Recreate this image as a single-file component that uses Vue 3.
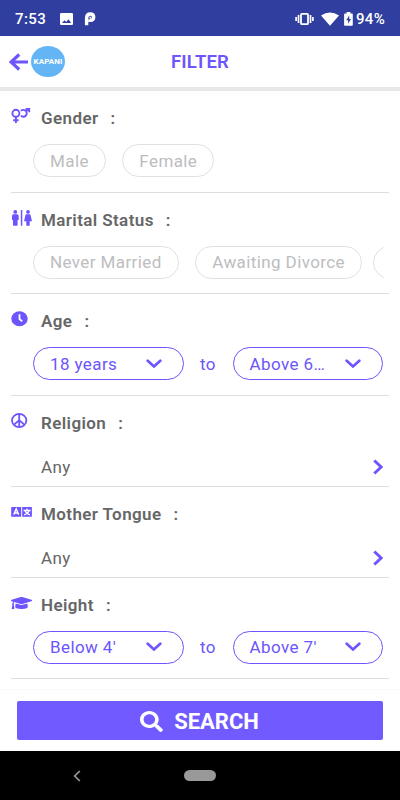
<template>
  <div class="screen">
    <div class="status-bar">
      <span class="time">7:53</span>
      <svg class="picture" viewBox="0 0 13 12" width="13" height="12">
        <path fill="#fff" fill-rule="evenodd" d="M1.2 0h10.6Q13 0 13 1.2v9.6q0 1.2-1.2 1.2H1.2Q0 12 0 10.800V1.200Q0 0 1.200 0zM2 10h9.200L8.400 6.300 6.200 9 4.500 7.200z" />
      </svg>
      <svg class="p-logo" viewBox="0 0 12 14" width="12" height="14">
        <path d="M2.600 13.300V6.200Q2.600 2 6.300 2q3.400 0 3.400 3.200 0 3.100-3.600 3.100" fill="none" stroke="#fff" stroke-width="3.400" />
        <path d="M4.200 10V7.200h2.400V10zM5.500 4.800h1.600v1.600H5.500z" fill="#fff" />
      </svg>
      <div class="spacer"></div>
      <svg class="vibrate" viewBox="0 0 19 14" width="19" height="14">
        <rect x="6" y="1.800" width="7" height="10.400" rx=".8" fill="none" stroke="#fff" stroke-width="1.800" />
        <path d="M3.500 3v8M15.500 3v8M1.100 5v4M17.900 5v4" stroke="#fff" stroke-width="1.700" />
      </svg>
      <svg class="wifi" viewBox="0 0 18 14" width="18" height="14">
        <path fill="#fff" d="M0 3.600Q9-2.800 18 3.600L9 13.800z" />
      </svg>
      <svg class="battery" viewBox="0 0 9 14" width="9" height="14">
        <path fill="#fff" d="M2.600 0h3.800v1.400H8q.8 0 .8.800v10.600q0 .9-.8.900H1q-.9 0-.9-.9V2.200q0-.8.900-.8h1.600z" />
        <path fill="#303f9f" d="M5.200 3.500 2.200 8.200h1.900v3.500L7 6.900H5.200z" />
      </svg>
      <span class="level">94%</span>
    </div>

    <header class="header">
      <svg class="back" viewBox="0 0 20 18" width="20" height="18">
        <path d="M19 9H2M10.200 1.500 2 9l8.200 7.500" fill="none" stroke="#6c55fc" stroke-width="3.200" />
      </svg>
      <div class="logo">KAPANI</div>
      <h1>FILTER</h1>
    </header>

    <main class="filters">
      <section v-for="item in filters" :key="item.title" class="filter" :class="{ short: item.value }">
        <div class="title-row">
          <span class="icon">
            <svg v-if="item.icon === 'gender'" viewBox="0 0 20 16" width="20" height="16">
              <g fill="none" stroke="#6c55fc" stroke-width="1.900">
                <circle cx="4.900" cy="5.300" r="3.500" />
                <path d="M4.900 8.800V15M2.200 12.200h5.400" />
                <path d="M9.900 2.900a3.400 3.400 0 1 1 0 4.800M14.900 3.400 17.900.7M14.600.9h3.600v3.400" />
              </g>
            </svg>
            <svg v-else-if="item.icon === 'restroom'" viewBox="0 0 21 17" width="21" height="17">
              <g fill="#6c55fc">
                <circle cx="4.300" cy="1.900" r="1.900" />
                <path d="M2.600 4.200h3.500q1.600 0 1.600 1.500v4.200H6.600v5.200q0 .6-.7.600H2.700q-.7 0-.7-.6V9.900H1V5.700q0-1.500 1.600-1.500z" />
                <path d="M9.800 0h1.500v15.700H9.800z" />
                <circle cx="17" cy="1.900" r="1.900" />
                <path d="M15.500 4.200h3q.8 0 1 .8l1.500 6.200h-2.300v4.500h-3.400v-4.500H13L14.500 5q.2-.8 1-.8z" />
              </g>
            </svg>
            <svg v-else-if="item.icon === 'clock'" viewBox="0 0 17 16" width="17" height="16">
              <ellipse cx="8.500" cy="7.800" rx="8.200" ry="7.500" fill="#6c55fc" />
              <path d="M8.500 3.300v4.800l2.700 2.200" fill="none" stroke="#fff" stroke-width="1.800" />
            </svg>
            <svg v-else-if="item.icon === 'peace'" viewBox="0 0 17 16" width="17" height="16">
              <g fill="none" stroke="#6c55fc" stroke-width="1.800">
                <ellipse cx="8.200" cy="7.500" rx="7.200" ry="6.600" />
                <path d="M8.200 1v13M8.200 7.300l-5.200 4.300M8.200 7.300l5.200 4.300" />
              </g>
            </svg>
            <svg v-else-if="item.icon === 'language'" viewBox="0 0 21 16" width="21" height="16">
              <path fill="#6c55fc" d="M.8 3h9.400v9.800H.8q-.6 0-.6-.6V3.600q0-.6.600-.6zM11.200 3h9.100q.6 0 .6.600v8.600q0 .6-.6.600h-9.100z" />
              <path d="m2.700 10.600 2.500-5.700 2.500 5.700M3.700 9h3" fill="none" stroke="#fff" stroke-width="1.400" />
              <path d="M12.600 6.500h7M16 4.500v2M18 6.900q-.8 2.600-4.800 3.900M14.200 7.200q1.200 2.700 4.800 3.600" fill="none" stroke="#fff" stroke-width="1.300" />
            </svg>
            <svg v-else viewBox="0 0 640 512" width="21" height="16" preserveAspectRatio="none">
              <path fill="#6c55fc" d="M622.34 153.2L343.4 67.5c-15.2-4.67-31.6-4.67-46.79 0L17.66 153.2c-23.54 7.23-23.54 38.36 0 45.59l48.63 14.94c-10.67 13.19-17.23 29.28-17.88 46.9C38.78 266.15 32 276.11 32 288c0 10.78 5.68 19.85 13.86 25.65L20.33 428.53C18.11 438.52 25.71 448 35.94 448h56.11c10.24 0 17.84-9.48 15.62-19.47L82.14 313.65C90.32 307.85 96 298.78 96 288c0-11.57-6.47-21.25-15.66-26.87.76-15.02 8.44-28.3 20.69-36.72L296.6 284.5c9.06 2.78 26.44 6.25 46.79 0l278.95-85.7c23.55-7.24 23.55-38.36 0-45.6zM352.79 315.09c-28.53 8.76-52.84 3.92-65.59 0l-145.02-44.55L128 384c0 35.35 85.96 64 192 64s192-28.65 192-64l-14.18-113.47-145.03 44.56z" />
            </svg>
          </span>
          <h2>{{ item.title }}</h2>
          <span class="colon">:</span>
        </div>

        <div v-if="item.chips" class="chips">
          <button v-for="chip in item.chips" :key="chip" class="chip">{{ chip }}</button>
          <!-- leading edge of the next chip in the scroller -->
          <span v-if="item.more" class="chip next"></span>
        </div>

        <div v-else-if="item.range" class="range">
          <template v-for="(label, i) in item.range" :key="label">
            <span v-if="i > 0" class="to">to</span>
            <button class="select">
              <span class="select-label">{{ label }}</span>
              <svg viewBox="0 0 16 10" width="16" height="10">
                <path d="m1.700 1.700 6.300 5.700 6.300-5.700" fill="none" stroke="#6c55fc" stroke-width="2.700" stroke-linecap="round" />
              </svg>
            </button>
          </template>
        </div>

        <div v-else class="value-row">
          <span>{{ item.value }}</span>
          <svg viewBox="0 0 10 16" width="10" height="16">
            <path d="m1.300 1.500 6.900 6.500-6.900 6.500" fill="none" stroke="#6c55fc" stroke-width="3" />
          </svg>
        </div>
      </section>
    </main>

    <div class="footer">
      <button class="search">
        <svg viewBox="0 0 512 512" width="23" height="21" preserveAspectRatio="none">
          <path fill="#fff" d="M505 442.7L405.3 343c-4.500-4.500-10.600-7-17-7H372c27.600-35.300 44-79.700 44-128C416 93.100 322.900 0 208 0S0 93.100 0 208s93.100 208 208 208c48.300 0 92.700-16.400 128-44v16.300c0 6.400 2.500 12.500 7 17l99.700 99.700c9.400 9.400 24.600 9.400 33.900 0l28.300-28.300c9.400-9.400 9.400-24.600.1-34zM208 336c-70.700 0-128-57.200-128-128 0-70.700 57.200-128 128-128 70.700 0 128 57.200 128 128 0 70.700-57.200 128-128 128z" />
        </svg>
        <span>SEARCH</span>
      </button>
    </div>

    <nav class="nav-bar">
      <svg viewBox="0 0 8 12" width="8" height="12">
        <path d="M6.800 1 1.700 6l5.100 5" fill="none" stroke="#999" stroke-width="1.700" />
      </svg>
      <div class="home"></div>
    </nav>
  </div>
</template>

<script setup>
const filters = [
  { title: 'Gender', icon: 'gender', chips: ['Male', 'Female'] },
  { title: 'Marital Status', icon: 'restroom', chips: ['Never Married', 'Awaiting Divorce'], more: true },
  { title: 'Age', icon: 'clock', range: ['18 years', 'Above 6…'] },
  { title: 'Religion', icon: 'peace', value: 'Any' },
  { title: 'Mother Tongue', icon: 'language', value: 'Any' },
  { title: 'Height', icon: 'cap', range: ["Below 4'", "Above 7'"] },
];
</script>

<style>
body {
  margin: 0;
}
</style>

<style scoped>
.screen {
  display: flex;
  flex-direction: column;
  width: 400px;
  height: 800px;
  overflow: hidden;
  background: #fff;
  font-family: Roboto, "Liberation Sans", sans-serif;
}

svg {
  display: block;
  flex: none;
}

button {
  font-family: inherit;
  margin: 0;
  background: #fff;
}

.status-bar {
  display: flex;
  align-items: center;
  flex: none;
  box-sizing: border-box;
  height: 36px;
  padding: 1px 15px 0 15px;
  background: #303f9f;
  color: #fff;
  font-size: 15px;
  font-weight: 500;
}

.time {
  width: 45px;
  letter-spacing: 0.4px;
}

.p-logo {
  margin-left: 11px;
}

.spacer {
  flex: 1;
}

.wifi {
  margin-left: 7px;
}

.battery {
  margin: 0 3px 0 5px;
}

.level {
  letter-spacing: 0.3px;
}

.header {
  display: flex;
  align-items: center;
  flex: none;
  box-sizing: border-box;
  height: 55px;
  padding: 0 9px;
  border-bottom: 4px solid #e6e7e8;
}

.logo {
  width: 34px;
  height: 31px;
  margin-left: 2px;
  border-radius: 50%;
  background: #64b5f6;
  color: #fff;
  font-size: 8px;
  font-weight: 700;
  line-height: 31px;
  text-align: center;
  letter-spacing: 0.1px;
}

h1 {
  flex: 1;
  margin: 0 56px 0 0;
  color: #6c55fc;
  font-size: 18.5px;
  font-weight: 600;
  text-align: center;
  letter-spacing: 0.2px;
}

.filters {
  flex: 1;
  min-height: 0;
  overflow: hidden;
  padding: 0 11px;
}

.filter {
  box-sizing: border-box;
  height: 101.5px;
  padding-top: 16px;
  border-bottom: 1px solid #dedede;
}

.filter.short {
  height: 91.2px;
}

.title-row {
  display: flex;
  align-items: center;
  height: 22px;
  color: #666;
  font-size: 17px;
  font-weight: 600;
  letter-spacing: 0.4px;
}

.icon {
  align-self: flex-start;
  width: 30px;
  height: 16px;
  margin-top: 1px;
}

h2 {
  margin: 0;
  font-size: inherit;
  font-weight: inherit;
}

.colon {
  margin-left: 12px;
}

.chips,
.range {
  display: flex;
  align-items: center;
  margin: 15px 6px 0 22px;
}

.chips {
  gap: 16.5px;
  margin-right: 5px;
  overflow: hidden;
}

.chip {
  flex: none;
  box-sizing: border-box;
  height: 33px;
  padding: 0 16px;
  border: 1px solid #e0e0e0;
  border-radius: 17px;
  color: #bcbdc0;
  font-size: 17px;
  letter-spacing: 0.4px;
}

.chip.next {
  width: 120px;
  margin-left: -5.5px;
}

.select {
  display: flex;
  align-items: center;
  box-sizing: border-box;
  width: 150.5px;
  height: 33px;
  padding: 0 21px 0 16px;
  border: 1px solid #6c55fc;
  border-radius: 17px;
  color: #6c55fc;
  font-size: 17px;
  letter-spacing: 0.4px;
}

.select-label {
  margin-right: auto;
  white-space: nowrap;
}

.to {
  flex: 1;
  color: #6c55fc;
  font-size: 17px;
  text-align: center;
  letter-spacing: 0.4px;
}

.value-row {
  display: flex;
  align-items: center;
  justify-content: space-between;
  height: 22px;
  margin: 22.5px 6px 0 30px;
  color: #666;
  font-size: 17px;
  letter-spacing: 0.4px;
}

.footer {
  flex: none;
  box-sizing: border-box;
  height: 62px;
  padding: 11px 17px;
  border-top: 1px solid #fafafa;
}

.search {
  display: flex;
  align-items: center;
  justify-content: center;
  gap: 11px;
  width: 100%;
  height: 39px;
  padding: 1px 1px 0 0;
  border: 0;
  border-radius: 2px;
  background: #715aff;
  color: #fff;
  font-size: 22px;
  font-weight: 700;
}

.nav-bar {
  display: flex;
  align-items: center;
  flex: none;
  box-sizing: border-box;
  height: 49px;
  padding-left: 73px;
  background: #000;
}

.home {
  width: 32px;
  height: 11px;
  margin-left: 103px;
  border-radius: 6px;
  background: #999;
}
</style>
